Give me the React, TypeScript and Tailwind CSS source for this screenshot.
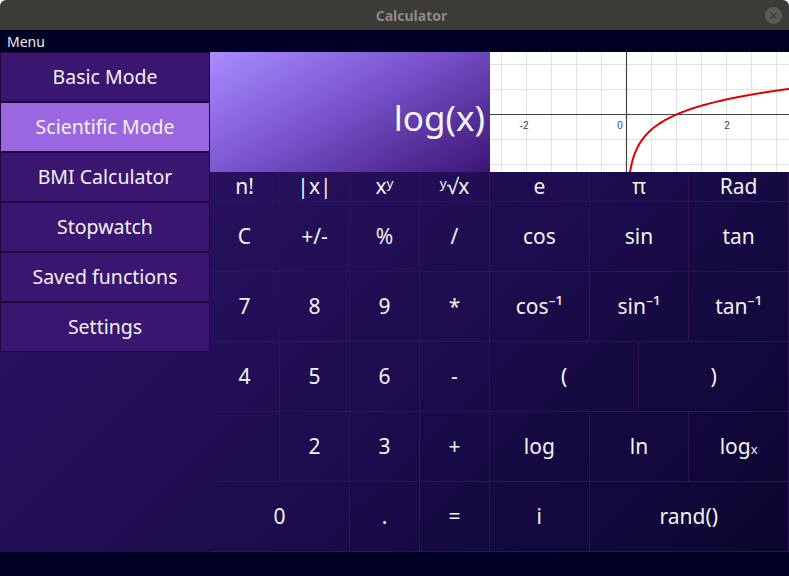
import React from 'react';

const FONT = { fontFamily: '"Noto Sans", "Open Sans", sans-serif' };

const MENU_ITEMS = ['Basic Mode', 'Scientific Mode', 'BMI Calculator', 'Stopwatch', 'Saved functions', 'Settings'];

type Key = { label: React.ReactNode; span?: string };

// 按行排列的按键（右侧三列用 6 个半列表示）
const KEYS: Key[] = [
  { label: 'n!' }, { label: '|x|' }, { label: 'xʸ' }, { label: 'ʸ√x' },
  { label: 'e', span: 'col-span-2' }, { label: 'π', span: 'col-span-2' }, { label: 'Rad', span: 'col-span-2' },
  { label: 'C' }, { label: '+/-' }, { label: '%' }, { label: '/' },
  { label: 'cos', span: 'col-span-2' }, { label: 'sin', span: 'col-span-2' }, { label: 'tan', span: 'col-span-2' },
  { label: '7' }, { label: '8' }, { label: '9' }, { label: '*' },
  { label: 'cos⁻¹', span: 'col-span-2' }, { label: 'sin⁻¹', span: 'col-span-2' }, { label: 'tan⁻¹', span: 'col-span-2' },
  { label: '4' }, { label: '5' }, { label: '6' }, { label: '-' },
  { label: '(', span: 'col-span-3' }, { label: ')', span: 'col-span-3' },
  { label: '' }, { label: '2' }, { label: '3' }, { label: '+' },
  { label: 'log', span: 'col-span-2' }, { label: 'ln', span: 'col-span-2' },
  { label: <span>log<span className="text-[13px]">x</span></span>, span: 'col-span-2' },
  { label: '0', span: 'col-span-2' }, { label: '.' }, { label: '=' },
  { label: 'i', span: 'col-span-2' }, { label: 'rand()', span: 'col-span-4' },
];

function Graph() {
  const ox = 136.5;
  const oy = 62.5;
  const vLines: number[] = [];
  for (let x = ox - 125; x < 300; x += 25) vLines.push(x);
  const hLines = [12.5, 37.5, 87.5, 112.5];
  const pts: string[] = [];
  for (let x = 140; x <= 299; x += 1) {
    const X = (x - ox) / 50;
    const y = oy - 50 * Math.log10(X);
    pts.push(`${x},${y.toFixed(2)}`);
  }
  return (
    <svg width="299" height="120" viewBox="0 0 299 120" className="block bg-white">
      {vLines.map((x) => (
        <line key={`v${x}`} x1={x} y1={0} x2={x} y2={120} stroke="#e2e2e2" strokeWidth="1" />
      ))}
      {hLines.map((y) => (
        <line key={`h${y}`} x1={0} y1={y} x2={299} y2={y} stroke="#e2e2e2" strokeWidth="1" />
      ))}
      <line x1={ox} y1={0} x2={ox} y2={120} stroke="#444" strokeWidth="1.2" />
      <line x1={0} y1={oy} x2={299} y2={oy} stroke="#444" strokeWidth="1.2" />
      <polyline points={pts.join(' ')} fill="none" stroke="#e00000" strokeWidth="2" />
      <text x={34} y={77} fontSize="10" fill="#444" textAnchor="middle" fontFamily="Liberation Sans, sans-serif">-2</text>
      <text x={130} y={77} fontSize="10" fill="#444" textAnchor="middle" fontFamily="Liberation Sans, sans-serif">0</text>
      <text x={237} y={77} fontSize="10" fill="#444" textAnchor="middle" fontFamily="Liberation Sans, sans-serif">2</text>
    </svg>
  );
}

export default function App() {
  return (
    <div className="w-[789px] h-[576px] overflow-hidden bg-white flex flex-col" style={FONT}>
      {/* 标题栏 */}
      <div className="h-[30px] bg-[#3c3b37] rounded-t-[6px] flex items-center relative">
        <div className="flex-1 text-center pl-[34px] text-[14px] font-bold text-[#8c8a86]">Calculator</div>
        <div className="absolute right-[7px] top-[7px] w-[17px] h-[17px] rounded-full bg-[#5c5a56] flex items-center justify-center">
          <svg width="7" height="7" viewBox="0 0 7 7">
            <path d="M0.5 0.5 L6.5 6.5 M6.5 0.5 L0.5 6.5" stroke="#3c3b37" strokeWidth="1.4" />
          </svg>
        </div>
      </div>

      {/* 菜单栏 */}
      <div className="h-[22px] bg-[#000022] flex items-center px-[7px] text-[14px] text-[#eeeeee]">Menu</div>

      {/* 主体 */}
      <div className="h-[500px] flex bg-[linear-gradient(135deg,#31166a_0%,#1f0d52_50%,#0b0630_100%)]">
        <div className="w-[210px] flex flex-col">
          {MENU_ITEMS.map((item, i) => (
            <div
              key={item}
              className={`h-[50px] flex items-center justify-center border border-[#1c0b38] text-[19.5px] text-[#f2f2f2] ${
                i === 1 ? 'bg-[#9a67e0]' : 'bg-[#3a1670]'
              }`}
            >
              {item}
            </div>
          ))}
        </div>

        <div className="flex-1 flex flex-col">
          <div className="h-[120px] flex">
            <div className="w-[280px] bg-[linear-gradient(150deg,#aa8dff_0%,#7a55cf_45%,#3b1574_100%)] flex items-center justify-end pr-[5px] pt-[12px]">
              <span className="text-[35px] text-[#f4f4f4]">log(x)</span>
            </div>
            <Graph />
          </div>

          <div className="flex-1 grid grid-cols-[70px_70px_70px_70px_repeat(6,1fr)] grid-rows-[30px_repeat(5,70px)]">
            {KEYS.map((k, i) => (
              <div
                key={i}
                className={`${k.span ?? ''} flex items-center justify-center border-r border-b border-[#2e1552] text-[21px] text-[#f2f2f2]`}
              >
                {k.label}
              </div>
            ))}
          </div>
        </div>
      </div>

      {/* 状态栏 */}
      <div className="flex-1 bg-[#000022]" />
    </div>
  );
}
